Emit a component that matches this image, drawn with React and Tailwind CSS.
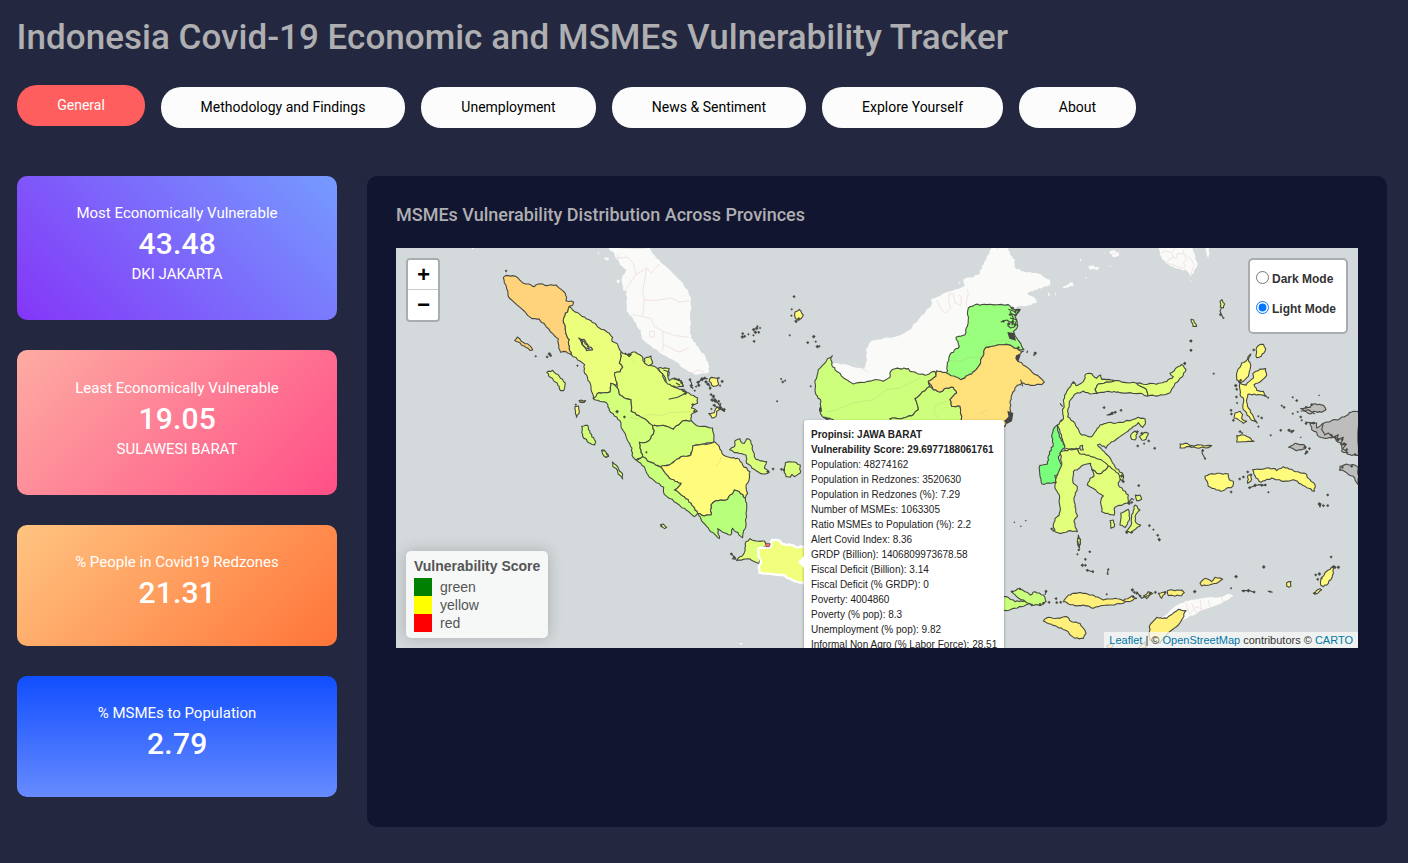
import React from "react";

const GREEN = "#d2ff7c";
const YELLOW = "#fffb7c";
const LIME = "#e2ff7c";
const AMBER = "#fff07c";
const LAKE = "#d4d9dc";

// Coastlines are stored in thirds of a pixel, grouped in sheets; long edges
// get a small repeatable offset so that neighbouring provinces stay joined.
function parse(text) {
  return text.trim().split(/\s+/).map((p) => p.split(",").map(Number));
}

function coast(text, amount = 2.6) {
  const pts = parse(text);
  const out = [];
  pts.forEach((a, i) => {
    const b = pts[(i + 1) % pts.length];
    out.push(a);
    const len = Math.hypot(b[0] - a[0], b[1] - a[1]);
    if (len < 9) return;
    const flip = a[0] < b[0] || (a[0] === b[0] && a[1] < b[1]) ? 1 : -1;
    const n = Math.min(6, Math.floor(len / 6));
    for (let k = 1; k < n; k += 1) {
      const t = k / n;
      const x = a[0] + (b[0] - a[0]) * t;
      const y = a[1] + (b[1] - a[1]) * t;
      const s = Math.sin(Math.round(x) * 12.9 + Math.round(y) * 78.2) * amount * 0.7 * flip;
      out.push([x - ((b[1] - a[1]) / len) * s, y + ((b[0] - a[0]) / len) * s]);
    }
  });
  return "M" + out.map((p) => p[0].toFixed(1) + " " + p[1].toFixed(1)).join("L") + "Z";
}

const SHEETS = [
  {
    move: "translate(0 0) scale(.33333)",
    land: [
      "638,0 655,18 672,50 690,65 678,90 680,125 692,130 692,190 705,205 735,250 740,275 770,300 830,335 880,372 905,380 940,372 940,355 930,330 905,295 885,270 882,240 885,150 875,125 845,90 810,55 780,30 762,0",
      "625,28 640,30 636,38 626,34", "662,96 671,95 670,106 663,105", "604,14 610,14 608,20", "226,0 234,0 231,5",
    ],
    borders: "M655 30L695 28L712 45L720 80L752 60L765 75L790 48M720 80L705 100L690 125M665 18L668 35M752 60L740 130L745 155L775 158L825 150L850 162L882 158M745 155L740 205L705 200M740 205L765 212L775 235L800 250L835 262L878 268M800 250L802 300L795 310M760 250L775 250L775 268L762 266ZM802 290L850 312L878 300M890 375L905 365L925 372",
    areas: [
      ["#ffd27c", "322,88 330,82 352,83 366,90 382,106 398,108 415,116 425,109 440,108 454,113 480,111 508,136 512,148 510,158 533,162 530,172 520,175 515,192 508,196 502,216 508,236 512,262 520,275 518,290 526,320 510,311 494,313 488,300 487,272 476,264 450,236 430,213 408,212 340,150 336,138"],
      ["#ffd27c", "356,277 364,267 376,280 400,292 410,306 402,307 382,293"],
      ["#ecff7c", "520,175 530,186 545,194 570,212 585,218 610,240 640,256 650,268 648,280 664,287 676,312 674,330 670,345 680,358 672,372 656,374 662,400 660,412 644,406 642,432 608,434 600,446 592,452 584,410 564,368 566,350 526,320 518,290 520,275 512,262 508,236 502,216 508,196 515,192"],
      [LAKE, "548,270 565,275 575,290 590,305 572,308 558,290"],
      ["#ecff7c", "555,276 565,281 580,303 572,301 560,290"],
      [LIME, "676,312 700,326 705,315 718,312 738,325 744,342 760,352 780,358 800,378 806,398 830,415 856,424 862,430 880,436 905,450 905,465 892,470 886,480 904,490 885,500 886,518 858,520 832,544 800,532 770,533 740,510 705,490 705,455 690,452 670,440 664,420 656,374 672,372 680,358 670,345 674,330"],
      [GREEN, "592,452 608,434 642,432 644,406 652,408 664,420 670,440 690,452 705,455 705,490 740,510 770,533 775,548 765,570 750,583 730,583 732,600 740,626 720,636 708,622 708,600 690,565 676,540 672,518 640,488 632,465"],
      [GREEN, "770,533 800,532 832,544 858,520 886,518 905,534 950,540 954,582 890,594 885,621 855,626 820,651 792,656 760,641 740,626 732,600 730,583 750,583 765,570 775,548"],
      [LIME, "452,373 470,367 490,385 508,405 503,428 494,428 484,405 463,388"],
      [GREEN, "557,535 575,532 582,555 599,580 596,591 580,585 560,565"],
      [LIME, "745,332 765,324 770,345 757,353 745,345"],
      [LIME, "787,360 820,362 815,375 820,398 836,390 855,400 862,415 840,418 815,408 800,378"],
      [YELLOW, "537,476 548,474 550,490 542,508 538,495"],
      ["#8b9062", "549,458 569,458 565,463 552,463"],
      [GREEN, "617,607 625,606 638,625 630,628"],
      [YELLOW, "945,388 965,390 968,410 952,415 940,400"],
      [YELLOW, "938,497 955,494 962,478 975,478 962,490 960,505 948,510"],
    ],
    soft: "M710 335L715 345M670 435L690 452M700 508L725 512L755 500L800 502L820 493L885 492",
    lines: "M818 454L845 448L870 435M802 366L820 372L818 385M832 393L856 398L862 415M840 405L852 412M864 424L870 432M880 395L887 405L885 420M905 405L920 392L935 392M950 445L985 490L950 470M945 455L960 460L975 475M935 405L945 420",
    dots: "330,69,3.5 419,325,3 544,353,3 453,327,4 460,318,5 464,323,4 539,470,3 663,491,5 685,507,4 698,320,5 704,320,3 688,317,3 882,395,4 886,413,5 889,420,3 896,428,3 906,403,5 908,412,5 918,394,6 926,390,4 930,402,5 936,409,5 942,421,4 968,390,3 978,400,4 945,440,4 952,445,5 948,456,5 957,458,6 968,460,4 955,472,4 973,468,3 983,487,4 946,483,3 868,436,5 860,426,4 900,416,3 890,470,4 895,490,4 848,395,4 856,404,4",
  },
  {
    move: "translate(0 192) scale(.33333)",
    land: ["1030,609 1040,609 1036,616", "1008,290 1012,290 1010,294", "1021,298 1025,298 1023,302"],
    areas: [
      [YELLOW, "885,45 890,18 950,8 956,5 970,20 982,45 1000,52 1030,58 1040,75 1062,95 1060,115 1050,140 1055,160 1048,175 1030,155 1015,150 995,178 960,182 945,195 945,225 925,228 905,220 885,190 865,170 835,150 855,130 820,115 792,80 820,75 855,50"],
      ["#c8ff7c", "722,62 740,50 760,65 792,80 820,115 855,130 835,150 865,170 885,190 905,220 895,230 870,210 850,195 805,163 803,142 760,112 745,80"],
      ["#b8ff7c", "905,220 925,228 945,225 945,195 960,182 995,178 1015,150 1030,155 1048,175 1052,190 1050,250 1040,293 1010,265 1004,285 985,278 965,266 970,296 940,270 915,238"],
      ["#daff7c", "1001,29 1015,20 1017,2 1032,-4 1038,9 1045,10 1052,-4 1064,2 1075,50 1080,58 1112,65 1105,85 1120,97 1100,102 1075,88 1052,70 1050,45 1015,38"],
      ["#daff7c", "1168,68 1195,66 1213,75 1212,100 1195,110 1188,103 1182,112 1170,110 1165,90"],
      [GREEN, "617,31 625,32 637,47 630,52 620,42"],
      [GREEN, "649,66 660,75 668,88 680,103 680,117 667,103 660,85 650,78"],
      [LIME, "793,254 802,252 812,262 806,266"],
      [LIME, "1062,296 1075,302 1105,303 1112,318 1088,328 1095,345 1088,370 1062,357 1022,362 1045,338 1050,305"],
    ],
    soft: "M975 50L972 65L960 78",
    lines: "M1003 340L1015 350L1020 358L1008 356",
    dots: "751,37,3 1131,87,4 1156,88,4 1163,90,4 1006,342,4 1014,352,4 796,259,3 1115,95,4",
  },
  {
    move: "translate(324 0) scale(.33333)",
    land: [
      "815,0 865,0 870,20 885,35 885,60 910,70 950,75 990,95 990,112 950,125 920,135 945,150 950,165 915,175 870,180 760,180 750,250 725,300 690,330 685,380 640,385 570,390 510,400 400,412 330,350 350,345 420,360 432,362 440,340 440,300 455,278 540,262 570,245 600,210 635,170 635,152 690,130 720,120 735,112 730,95 775,80 790,50",
      "985,133 988,135 989,146 984,143", "715,100 722,104 717,108",
    ],
    borders: "M648 155L665 185L678 195L692 180L685 160L690 135L700 138L705 165L722 172L725 150L718 140M742 125L745 135L738 170L743 178M395 345L410 352L445 372",
    areas: [
      ["#ceff7c", "333,328 322,332 315,345 295,365 285,405 288,440 303,460 300,490 310,508 340,515 345,540 520,540 510,512 550,510 580,500 595,485 585,452 630,415 625,400 648,385 645,370 615,382 570,370 565,362 525,362 512,370 510,388 490,400 465,395 400,408 380,395 350,370 335,350"],
      ["#ceff7c", "630,415 640,425 660,432 680,420 700,418 710,435 690,455 695,475 720,475 728,535 520,540 510,512 550,510 580,500 595,485 585,452"],
      ["#9aff7c", "745,180 765,170 800,170 865,170 875,182 900,185 885,200 893,235 880,250 890,270 905,295 912,305 895,305 865,290 830,292 798,298 785,330 780,350 755,378 722,395 680,380 682,350 690,320 718,295 708,268 735,260 742,235"],
      ["#ffe17c", "798,298 830,292 865,290 895,305 910,310 895,320 890,335 930,365 973,402 965,410 930,412 905,405 885,420 870,460 872,490 855,535 728,535 720,475 695,475 690,455 710,435 700,418 680,420 660,432 640,425 625,400 648,385 650,368 680,375 722,395 755,378 780,350 785,330"],
      [YELLOW, "225,192 238,184 250,202 245,210 236,217 225,208"],
    ],
    soft: "M320 492L345 487L400 465L460 455L500 425L540 420L600 390M680 460L650 470L640 490L655 510M785 325L740 330L720 340L690 338M790 300L820 278L880 280M780 500L800 485",
    blobs: "M862 252L882 255L888 278L868 272ZM888 322L902 320L895 342L886 332ZM862 488L880 495L876 520L860 528L852 518L866 508ZM298 478L305 480L306 492L298 490ZM308 508L335 513L320 516Z",
    lines: "M865 184L882 190L900 184L888 203L872 196M842 222L860 216L880 228L895 232M870 210L890 215L884 236L872 240L862 232M902 395L908 415M333 328L338 322M870 190L880 210L876 232",
    dots: "222,146,4 215,184,3 214,203,3 228,220,5 236,212,4 209,262,3 263,284,4 281,266,5 287,281,3 292,296,5 298,295,3 101,245,5 110,241,5 106,253,5 116,253,4 100,262,3 102,280,4 85,259,3 68,257,4 67,267,5 74,265,4 112,235,3 120,240,3 183,393,3 188,402,4 195,398,3 171,460,3 7,401,3 0,413,3 0,480,5 12,485,5 272,415,3 878,180,4 886,192,4 895,188,4 870,200,4 850,220,4 878,222,5 866,228,5 885,230,4 945,315,4 942,321,3 922,310,2 895,299,4",
  },
  {
    move: "translate(604 92) scale(.33333)",
    land: [],
    areas: [
      [LIME, "172,255 190,238 188,215 192,195 190,180 198,160 212,140 220,126 228,137 250,125 258,102 275,101 290,115 302,105 305,118 345,122 295,132 285,148 292,160 270,162 250,153 222,165 208,185 203,230 225,250 245,285 275,290 300,255 318,250 365,247 395,240 415,232 435,236 436,252 428,262 415,248 395,265 360,290 330,310 318,325 300,312 292,315 322,345 345,380 370,405 368,425 345,400 300,360 240,342 230,325 195,332 188,300"],
      [LIME, "345,122 410,130 440,150 443,168 420,160 360,158 330,155 292,160 285,148 295,132"],
      [LIME, "410,130 470,133 500,125 520,110 510,100 545,73 558,88 545,112 525,130 510,158 490,165 443,168 440,150"],
      ["#7aff7c", "172,255 160,268 155,290 160,312 145,348 143,372 120,376 118,388 126,432 168,428 164,408 180,395 185,375 175,350 195,318 178,290"],
      [LIME, "182,335 195,332 230,325 240,342 265,345 300,358 325,378 305,400 290,400 275,388 272,370 250,375 220,395 220,430 232,440 226,465 222,480 225,500 232,530 222,545 232,575 212,572 185,580 165,575 160,555 165,535 178,525 180,500 178,465 165,445 168,415 185,375"],
      [LIME, "325,378 355,400 360,415 355,435 385,465 385,488 345,502 342,526 305,515 303,480 310,468 262,435 270,415 282,408 275,388 290,400 305,400"],
      [LIME, "392,285 405,273 412,280 405,300 395,298"],
      [LIME, "362,520 385,508 388,540 375,563 360,555"],
      [LIME, "405,495 420,510 405,530 408,548 422,555 392,578 378,575 395,550 395,530"],
      [LIME, "330,542 340,540 343,560 333,565"], [LIME, "406,465 420,465 425,478 410,482"],
      [LIME, "418,290 432,278 445,280 438,298 425,300"],
      [LIME, "235,585 241,600 239,625 233,610"],
      [LAKE, "240,318 248,316 250,330 242,330"],
    ],
    lines: "M320 226L335 220L350 216M325 226L340 222M198 325L215 330L240 325M383 492L395 475L402 480M180 190L188 200",
    dots: "312,203,4 336,219,4 345,217,4 363,211,4 412,275,4 425,280,4 446,303,4 432,311,3 413,318,4 464,325,4 416,437,4 365,408,5 370,425,4 448,557,4 460,569,3 473,586,4 477,598,4 43,547,2 62,559,2 77,542,2 155,567,4 160,572,3 232,643,3 269,635,3 256,657,3 236,630,3 106,40,4 81,37,2 572,3,4 572,31,3 554,70,4 387,490,5 395,487,4 380,578,4 395,577,4 220,128,4 184,242,3",
  },
  {
    move: "translate(784 0) scale(.33333)",
    land: [],
    areas: [
      ["#d9ff7c", "120,160 126,155 134,168 130,180 121,177"],
      [LIME, "33,214 41,216 50,235 39,235"],
      [YELLOW, "228,305 236,292 250,289 257,303 244,325 230,329"],
      [YELLOW, "197,340 210,320 213,318 205,333 212,350 205,385 190,400 180,405 170,395 172,370 185,345"],
      [YELLOW, "180,405 198,412 208,400 220,390 218,378 240,363 257,362 260,382 240,402 222,410 230,427 250,430 260,446 235,440 204,438 200,455 205,480 220,505 232,525 215,517 190,485 190,450 180,440"],
      [YELLOW, "165,495 180,490 188,500 185,512 200,520 190,526 175,515 162,510"],
      [YELLOW, "170,563 195,562 222,580 170,582"],
      [YELLOW, "0,588 22,586 32,596 0,600"],
      [YELLOW, "32,592 95,593 85,599 33,598"],
      [YELLOW, "75,685 95,677 145,678 148,695 160,700 158,715 122,730 85,715"],
      [YELLOW, "218,665 260,660 285,662 290,668 310,656 340,668 375,676 390,695 405,710 403,730 375,715 340,695 310,700 275,690 255,698 243,703 228,690"],
      [YELLOW, "204,682 215,680 212,700 203,706"],
      ["#bdbdbd", "362,482 390,478 400,468 430,472 438,485 425,493 400,490 390,498"],
      ["#bdbdbd", "535,490 515,492 480,512 432,525 410,540 410,525 390,525 395,545 410,552 412,562 430,570 460,568 485,590 485,610 510,620 535,622"],
      ["#bdbdbd", "326,598 345,586 372,590 376,602 350,608"],
      ["#bdbdbd", "480,655 500,648 525,652 535,660 535,710 520,685 480,665"],
      ["#a9ad70", "416,767 423,768 420,777"],
    ],
    lines: "M124 180L120 190L128 208M68 603L66 615L76 633M430 525L425 545L434 558M375 522L405 526M432 562L445 555L460 568L475 560L470 575L490 568L482 590L500 588L488 602L505 615M362 490L385 485L405 498M205 720L235 710L258 712",
    dots: "121,200,4 130,210,3 33,279,4 33,307,4 101,377,3 221,306,4 14,347,4 182,397,4 167,413,5 170,424,4 169,447,4 171,465,3 153,487,4 154,498,4 160,517,4 235,505,3 245,510,4 235,536,3 264,449,3 178,402,4 180,551,4 186,555,3 272,562,3 302,547,4 327,547,5 335,551,5 340,548,3 305,473,3 312,478,4 338,448,3 350,458,4 353,492,3 338,497,3 362,507,4 365,517,3 378,478,4 395,470,4 417,442,2 375,598,5 380,612,5 388,602,4 376,617,3 362,568,2 378,527,4 400,525,4 75,632,3 68,608,4 153,732,4 179,693,4 190,687,4 203,672,4 212,680,3 209,719,4 225,712,5 245,712,4 256,711,4 265,733,3 443,741,4 418,768,5 430,773,4 443,773,4 454,562,4 466,568,4 474,575,5 486,575,4 492,588,5 500,605,4 525,620,4 487,658,4 515,655,4 480,666,3",
  },
  {
    move: "translate(604 292) scale(.33333)",
    land: ["480,235 545,188 570,180 665,170 685,162 702,168 650,195 610,210 550,240 530,240"],
    borders: "M558 190L568 222M575 190L590 220M600 180L605 210M625 180L630 200M665 172L670 186M568 222L590 200L610 210",
    areas: [
      ["#c8ff7c", "0,168 20,170 45,185 75,182 88,192 65,200 40,205 20,212 0,205"],
      ["#c8ff7c", "35,155 60,145 75,155 90,165 105,155 130,165 138,185 125,195 95,195 70,180 50,170"],
      [AMBER, "190,185 205,165 235,158 275,165 310,180 345,175 370,182 390,178 370,190 330,195 295,200 280,205 250,195 225,197"],
      [AMBER, "370,182 395,168 410,175 385,185"],
      [AMBER, "430,168 445,155 455,158 440,176"], [AMBER, "475,160 497,155 485,175"],
      [AMBER, "502,152 545,150 553,158 545,167 505,167"],
      [AMBER, "600,130 615,115 635,125 645,112 668,118 650,130 605,138"],
      [AMBER, "130,243 145,232 180,235 200,230 215,245 240,250 258,280 250,295 225,295 195,270 165,257"],
      [AMBER, "450,255 470,232 500,235 535,208 558,212 545,240 535,255 500,285 480,310 450,300 448,275"],
      ["#fff77c", "320,318 335,310 340,318 325,325"],
      ["#fff77c", "415,325 435,305 438,325"],
      [YELLOW, "962,135 965,112 985,90 1000,80 998,105 985,130 970,140"],
      [YELLOW, "860,128 873,125 873,138 867,142 860,138"],
      [YELLOW, "940,160 960,146 965,150 948,162"],
      [LIME, "233,-5 242,-2 237,22"],
    ],
    lines: "M725 152L750 152L765 158M803 153L818 157M258 90L282 96M325 87L322 100M138 152L135 165M410 155L425 175L460 160",
    dots: "138,154,4 147,187,4 168,176,4 170,188,4 182,187,4 320,163,3 397,150,5 403,157,4 399,170,4 410,160,4 420,168,4 450,160,4 466,157,4 495,158,4 584,155,5 708,110,5 693,145,3 730,153,4 745,152,5 762,156,4 810,155,3 791,81,5 993,51,4 1004,82,5 1015,82,5 947,105,4 958,102,5 953,118,4 965,115,3 1000,80,4 944,160,4 236,30,3 269,36,3 256,59,3 247,76,5 256,76,4 262,91,4 278,95,4 325,88,3 323,102,3 478,0,4 36,155,4 60,148,3 95,195,4 120,193,4 130,190,4",
  },
  {
    move: "translate(644 -8) scale(.33333)",
    land: [
      "357,20 455,20 465,45 472,75 462,98 450,110 443,95 436,88 430,92 405,85 380,72 366,58 359,42",
      "498,20 509,20 507,45 504,62 500,45",
      "208,35 218,31 238,38 236,48 218,51", "145,78 160,75 165,82 178,82 175,88 148,88",
      "68,142 85,132 97,127 102,135 90,138 72,146", "45,155 48,160 45,172", "120,56 125,60 120,66",
      "134,111 140,111 140,116", "210,76 213,80 208,80", "449,122 454,120 452,126", "192,38 195,38 194,42",
    ],
    borders: "M362 40L372 32L395 38L405 25M395 38L400 52L385 60L382 70L430 85L436 75M400 52L410 55L412 40L432 42L430 30M432 42L440 58L430 68L436 75M440 45L455 60L462 75L452 105M215 45L222 38L228 44",
    areas: [],
  },
];

const JAVA = "1088,325 1123,322 1128,300 1152,302 1160,312 1185,315 1205,322 1230,320 1230,430 1205,425 1187,420 1160,405 1090,398 1088,380 1095,365 1088,350";

function Sheet({ data }) {
  return (
    <g transform={data.move}>
      {data.land.map((d) => <path key={d} d={coast(d, 3)} fill="#fafaf8" />)}
      {data.borders && <path d={data.borders} fill="none" stroke="#f0dee1" strokeWidth="2.6" strokeLinejoin="round" />}
      {data.areas.map(([fill, d]) => (
        <path key={d} d={coast(d)} fill={fill} stroke="#484a40" strokeWidth="3.3" strokeLinejoin="round" />
      ))}
      {data.soft && <path d={data.soft} fill="none" stroke="#b6ba80" strokeOpacity=".45" strokeWidth="2" />}
      {data.blobs && <path d={data.blobs} fill="#454545" />}
      {data.lines && <path d={data.lines} fill="none" stroke="#484a40" strokeWidth="3.3" strokeLinejoin="round" />}
      {data.dots && data.dots.split(" ").map((item) => {
        const [x, y, r] = item.split(",").map(Number);
        return <path key={item} d={coast(`${x - r},${y} ${x},${y - r} ${x + r},${y - 1} ${x + 1},${y + r}`)} fill="#45463f" stroke="#45463f" />;
      })}
    </g>
  );
}

function MapDrawing() {
  return (
    <svg className="block h-[400px] w-[962px]" viewBox="0 0 962 400">
      {SHEETS.map((s) => <Sheet key={s.move} data={s} />)}
      <g transform="translate(0 192) scale(.33333)">
        <path d={coast(JAVA)} fill="#f2ff7c" stroke="#fff" strokeWidth="7" strokeLinejoin="round" />
        <path d="M1109 310L1123 311L1120 320L1110 320Z" fill="#ff6c74" stroke="#5a4a40" strokeWidth="2" />
      </g>
    </svg>
  );
}

const TABS = [
  ["Methodology and Findings", "w-[244px]"],
  ["Unemployment", "w-[175px]"],
  ["News & Sentiment", "w-[194px]"],
  ["Explore Yourself", "w-[181px]"],
  ["About", "w-[117px]"],
];

const CARDS = [
  ["Most Economically Vulnerable", "43.48", "DKI JAKARTA", "h-[144px] pt-[26px] bg-[linear-gradient(45deg,#8436f7,#759bff)]"],
  ["Least Economically Vulnerable", "19.05", "SULAWESI BARAT", "h-[145px] pt-[27px] bg-[linear-gradient(135deg,#fdaca2,#ff4f87)]"],
  ["% People in Covid19 Redzones", "21.31", "", "h-[121px] pt-[26px] bg-[linear-gradient(135deg,#ffc481,#ff7438)]"],
  ["% MSMEs to Population", "2.79", "", "h-[121px] pt-[26px] bg-[linear-gradient(180deg,#114eff,#678bff)]"],
];

const FACTS = [
  "Population: 48274162",
  "Population in Redzones: 3520630",
  "Population in Redzones (%): 7.29",
  "Number of MSMEs: 1063305",
  "Ratio MSMEs to Population (%): 2.2",
  "Alert Covid Index: 8.36",
  "GRDP (Billion): 1406809973678.58",
  "Fiscal Deficit (Billion): 3.14",
  "Fiscal Deficit (% GRDP): 0",
  "Poverty: 4004860",
  "Poverty (% pop): 8.3",
  "Unemployment (% pop): 9.82",
  "Informal Non Agro (% Labor Force): 28.51",
];

const SCALE = [["green", "bg-[#008000]"], ["yellow", "bg-[#ffff00]"], ["red", "bg-[#ff0000]"]];

export default function App() {
  return (
    <div className="h-[863px] overflow-hidden bg-[#232840] pl-[17px] font-['Roboto',sans-serif]">
      <h1 className="-ml-[0.4px] h-[58px] pt-[17px] text-[35px] leading-[42px] font-medium tracking-[0.025px] whitespace-nowrap text-[#afafb2]">
        Indonesia Covid-19 Economic and MSMEs Vulnerability Tracker
      </h1>
      <nav className="mt-[27px] flex items-start gap-4 text-[14px] leading-[41px]">
        <button className="h-[41px] w-[128px] rounded-[20px] bg-[#ff5e5e] text-white">General</button>
        {TABS.map(([name, width]) => (
          <button key={name} className={`${width} mt-0.5 h-[41px] rounded-[20px] bg-[#fcfcfc] text-black`}>{name}</button>
        ))}
      </nav>
      <div className="mt-[48px] flex items-start gap-[30px]">
        <aside className="flex w-[320px] flex-col gap-[30px]">
          {CARDS.map(([label, value, place, look]) => (
            <section key={label} className={`${look} rounded-[10px] text-center text-white`}>
              <div className="text-[15px] leading-[23px]">{label}</div>
              <div className="pl-[0.5px] text-[30px] leading-[37px] font-medium tracking-[0.2px]">{value}</div>
              <div className="text-[15px] leading-[25px]">{place}</div>
            </section>
          ))}
        </aside>
        <main className="h-[651px] w-[1020px] rounded-[10px] bg-[#121530] px-[29px] pt-[27px]">
          <h2 className="mb-[21px] text-[18px] leading-[24px] font-medium text-[#afafb2]">MSMEs Vulnerability Distribution Across Provinces</h2>
          <div className="relative h-[400px] w-[962px] overflow-hidden bg-[#d4d9dc] font-['Liberation_Sans',sans-serif]">
            <MapDrawing />
            <div className="absolute top-[10px] left-[10px] w-[34px] overflow-hidden rounded-[4px] border-2 border-[#a8adaf] font-['Liberation_Mono',monospace] text-[22px] leading-[30px] font-bold text-black">
              <button className="block h-[30px] w-[30px] border-b border-[#ccc] bg-white pt-[4px] indent-px leading-[26px]">+</button>
              <button className="block h-[30px] w-[30px] bg-white pt-[4px] indent-px leading-[26px]">−</button>
            </div>
            <div className="absolute top-[10px] right-[10px] h-[76px] w-[100px] rounded-[5px] border-2 border-[#a8adaf] bg-white pt-[4px] pl-[6px] text-[12px] font-bold text-[#333]">
              <label className="flex h-[30px] items-center gap-[3px]">
                <input type="radio" name="mode" className="mb-[3px] h-[13px] w-[13px]" />Dark Mode
              </label>
              <label className="flex h-[30px] items-center gap-[3px]">
                <input type="radio" name="mode" defaultChecked className="mb-[3px] h-[13px] w-[13px]" />Light Mode
              </label>
            </div>
            <div className="absolute bottom-[10px] left-[10px] h-[87px] w-[142px] rounded-[5px] bg-[#f6f8f8] px-2 pt-[6px] text-[14px] leading-[18px] text-[#555] shadow-[0_0_15px_rgba(0,0,0,0.2)]">
              <div className="mb-[3px] font-bold whitespace-nowrap">Vulnerability Score</div>
              {SCALE.map(([name, fill]) => (
                <div key={name} className="flex gap-2"><i className={`${fill} h-[18px] w-[18px]`} />{name}</div>
              ))}
            </div>
            <div className="absolute right-0 bottom-0 h-4 bg-[#fafafa]/75 px-[5px] text-[11px] leading-[16px] text-[#333]">
              <span className="text-[#0078A8]">Leaflet</span> | © <span className="text-[#0078A8]">OpenStreetMap</span> contributors © <span className="text-[#0078A8]">CARTO</span>
            </div>
            <div className="absolute top-[172px] left-[408px] h-[284px] w-[200px] rounded-[3px] bg-white pt-[7px] pl-[7px] text-[10px] leading-[15px] whitespace-nowrap text-[#222] shadow-[0_1px_3px_rgba(0,0,0,0.4)]">
              <i className="absolute top-[136px] -left-[12px] border-6 border-transparent border-r-white" />
              <div className="font-bold">Propinsi: JAWA BARAT</div>
              <div className="font-bold">Vulnerability Score: 29.6977188061761</div>
              {FACTS.map((fact) => <div key={fact}>{fact}</div>)}
            </div>
          </div>
        </main>
      </div>
    </div>
  );
}
